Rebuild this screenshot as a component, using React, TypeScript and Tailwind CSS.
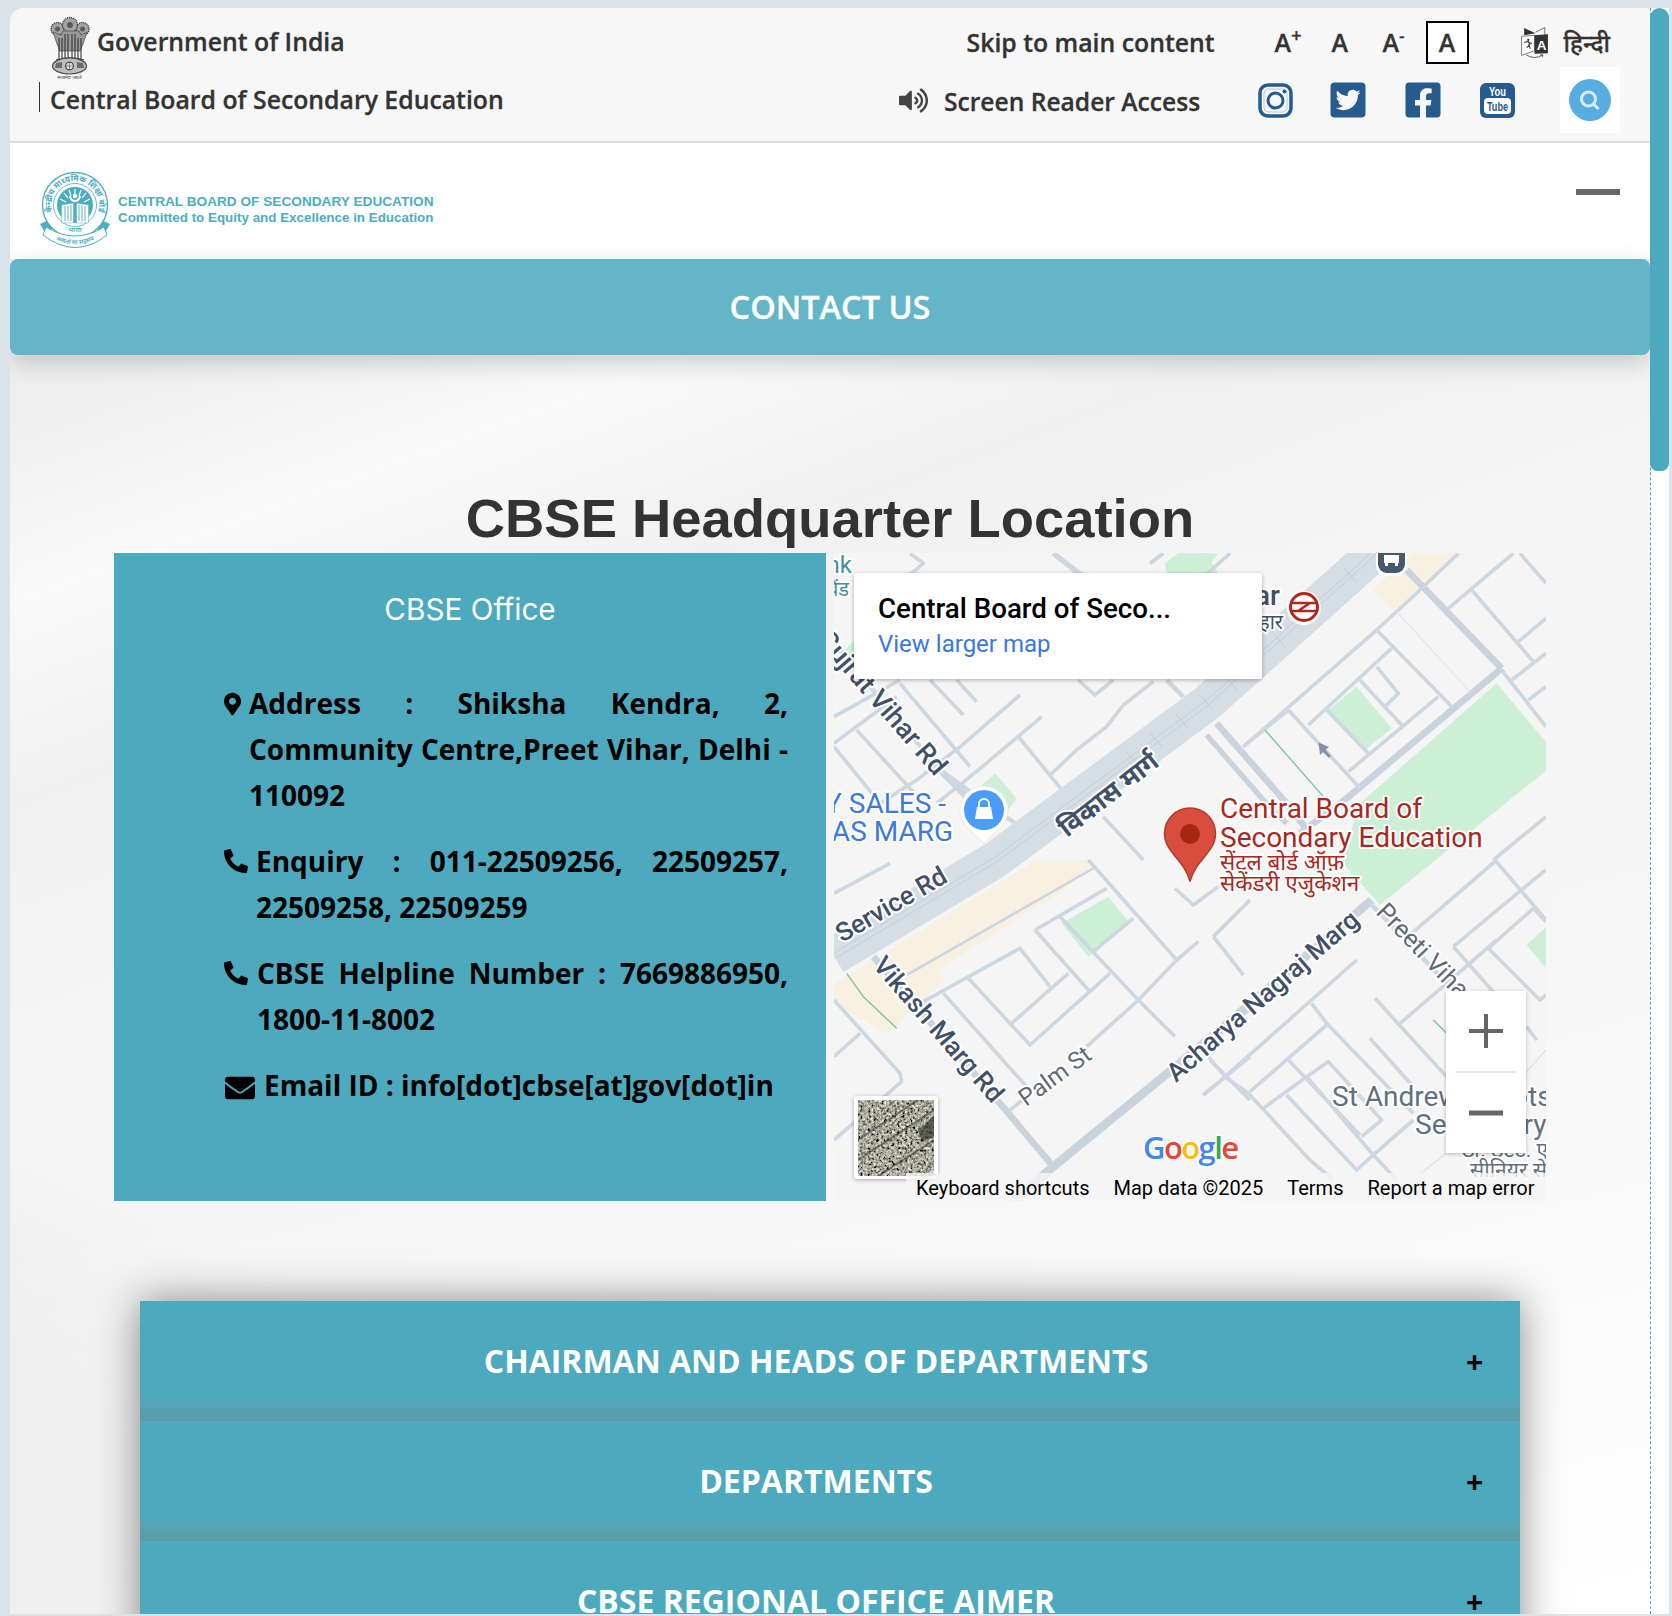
import React from "react";
import { FaMapMarkerAlt, FaPhoneAlt, FaEnvelope, FaVolumeUp, FaTwitterSquare, FaFacebookSquare } from "react-icons/fa";

const sans = "font-['Open_Sans','Noto_Sans',sans-serif]";
const ROAD = "#cdd7e2";
const THICK = "#c9d3de";

const Road = ({ p, w = 11, c = ROAD }: { p: string; w?: number; c?: string }) => (
  <polyline points={p} fill="none" stroke={c} strokeWidth={w} strokeLinejoin="round" strokeLinecap="butt" />
);

const Label = ({ x, y, a = 0, s = 26, c = "#3f5068", w = 500, anchor = "start", children }: { x: number; y: number; a?: number; s?: number; c?: string; w?: number; anchor?: "start" | "end" | "middle"; children: React.ReactNode }) => (
  <text transform={`translate(${x} ${y}) rotate(${a})`} fontFamily="Roboto, 'Noto Sans', sans-serif" fontSize={s} fontWeight={w} fill={c} stroke="#ffffff" strokeWidth={4} strokeLinejoin="round" paintOrder="stroke" textAnchor={anchor}>
    {children}
  </text>
);

function MapDrawing() {
  const beige = "#f8f0e0";
  const green = "#ccefd6";
  return (
    <svg viewBox="834 553 712 648" width="712" height="648" className="block">
      <rect x="834" y="553" width="712" height="648" fill="#f5f5f5" />
      {/* areas */}
      <g transform="translate(830 540) scale(0.33333)" fill={green}>
        <polygon points="1005,70 1045,40 1130,40 1165,100 1010,100" />
        <polygon points="40,335 75,300 120,340 90,420" />
        <polygon points="430,760 495,700 560,775 530,815" />
      </g>
      <g transform="translate(1200 540) scale(0.33333)">
        <polygon fill={green} points="0,40 55,40 40,60 0,90" />
        <polygon fill={green} points="470,440 575,565 495,630 385,510" />
        <polygon fill={green} points="890,430 1038,605 1038,692 540,1095 425,965 480,790" />
        <polygon fill={beige} points="520,150 640,40 790,40 580,210" />
      </g>
      <g transform="translate(830 860) scale(0.33333)">
        <polygon fill={beige} points="12,372 620,0 780,0 780,20 695,95 620,140 565,175 470,240 320,330 345,360 270,430 200,500 170,520 12,430" />
        <polygon fill={green} points="835,110 900,190 775,290 695,190" />
      </g>
      <g transform="translate(1200 860) scale(0.33333)">
        <polygon fill={green} points="1038,200 980,255 1038,325" />
      </g>

      {/* streets */}
      <g transform="translate(830 540) scale(0.33333)">
        <Road p="670,40 760,110" w={16} />
        <Road p="960,70 1000,40" w={12} />
        <Road p="240,40 280,70 210,130" />
        <Road p="12,310 330,690 570,860" w={12} />
        <Road p="330,690 430,790" w={20} />
        <Road p="210,430 420,680" />
        <Road p="300,420 400,525" />
        <Road p="380,420 440,485" />
        <Road p="80,570 290,800" />
        <Road p="12,620 150,790" />
        <Road p="12,530 210,420" />
        <Road p="12,610 200,470" />
        <Road p="570,465 385,625 260,720 150,790" />
        <Road p="635,530 445,690 320,790" />
        <Road p="565,590 700,755" />
        <Road p="660,705 740,630 830,560 880,495 970,425" />
        <Road p="745,420 795,465 850,420" />
        <Road p="1010,420 1060,470" w={14} />
        <Road p="820,830 940,960" />
      </g>
      <g transform="translate(1200 540) scale(0.33333)">
        <Road p="90,40 0,120" />
        <Road p="620,90 905,385" w={20} c={THICK} />
        <Road p="905,385 440,775 300,880" w={20} c={THICK} />
        <Road p="530,270 760,505" />
        <Road p="130,620 530,270 660,150 775,40" />
        <Road p="265,510 480,745" />
        <Road p="325,555 575,325" />
        <Road p="380,510 505,640" />
        <Road p="445,695 715,470" />
        <Road p="480,420 605,555" />
        <Road p="530,380 595,460 555,500" />
        <Road p="745,205 940,40" />
        <Road p="815,150 1000,365" />
        <Road p="960,40 1038,130" />
        <Road p="955,305 1038,235" />
        <Road p="935,420 1038,340" />
        <Road p="905,390 1038,560" />
        <Road p="985,480 1038,440" />
        <Road p="880,960 1038,830" />
        <Road p="265,510 130,620" />
        <Road p="50,550 260,790 330,880" w={20} c={THICK} />
        <Road p="20,585 190,780 260,850" w={16} c={THICK} />
        <Road p="590,215 810,455" w={4} c="#e6e6e8" />
        <Road p="195,570 370,770" w={4} c="#7cc2a0" />
      </g>
      <g transform="translate(830 860) scale(0.33333)">
        <Road p="12,100 180,10" />
        <Road p="130,290 510,730 670,920" w={20} c={THICK} />
        <Road p="230,345 790,25" w={8} />
        <Road p="280,425 570,265 660,380" />
        <Road p="340,400 590,680" />
        <Road p="415,355 600,555 840,340" />
        <Road p="545,490 715,340" />
        <Road p="615,210 830,85" />
        <Road p="615,210 780,395" />
        <Road p="690,170 925,420 1035,530" />
        <Road p="790,275 910,175" />
        <Road p="775,0 1040,300 925,420 770,560" />
        <Road p="1105,245 1040,300" />
        <Road p="1035,85 1090,135 1165,80" />
        <Road p="1150,230 1240,345" />
        <Road p="1150,230 1260,120" />
        <Road p="12,590 90,520" />
        <Road p="12,420 210,640 215,665 12,840" />
        <Road p="1120,705 1260,590" />
        <Road p="1140,600 1260,720" />
        <Road p="540,750 590,710" />
        <Road p="50,340 100,410 200,505" w={4} c="#7cc2a0" />
        <Road p="1330,380 670,920 550,1020" w={26} c={THICK} />
      </g>
      <g transform="translate(1200 860) scale(0.33333)">
        <Road p="515,120 0,560" w={26} c={THICK} />
        <Road p="510,130 540,160 770,400" w={14} />
        <Road p="470,300 75,650 10,705" />
        <Road p="0,560 75,650 145,700 330,900 400,960" />
        <Road p="335,430 380,490 640,760" />
        <Road p="380,495 150,695" />
        <Road p="265,600 480,825" />
        <Road p="190,745 320,650 385,605 545,780 485,830" />
        <Road p="320,650 520,885 640,780" />
        <Road p="260,705 470,930 520,885 590,960" />
        <Road p="525,415 740,650" />
        <Road p="510,535 640,680" />
        <Road p="600,490 740,370 890,240" />
        <Road p="635,220 890,0" />
        <Road p="760,260 1000,60 1038,30" />
        <Road p="885,0 1038,180" />
        <Road p="760,260 880,395" />
        <Road p="865,265 1020,420 1038,405" />
        <Road p="865,265 1000,145 1038,185" />
        <Road p="980,500 1010,540" />
        <Road p="975,640 1038,570" w={4} c="#e2e2e4" />
        <Road p="650,950 800,830" w={4} c="#e2e2e4" />
        <Road p="700,480 740,520" w={4} c="#7cc2a0" />
      </g>

      {/* main road with rail */}
      <polyline points="834,956 995,860 1207,703 1350,575 1410,520" fill="none" stroke="#d5dde5" strokeWidth="37" strokeLinejoin="round" />
      <polyline points="834,953 995,857 1207,700 1350,572 1410,517" fill="none" stroke="#c8cdd2" strokeWidth="1" />
      <polyline points="834,959 995,863 1207,706 1350,578 1410,523" fill="none" stroke="#c8cdd2" strokeWidth="1" />
      <g stroke="#c8cdd2" strokeWidth="1">
        <path d="M1201,696 l12,14 M1226,677 l12,14 M1273,633 l12,14 M1344,568 l12,14 M1126,751 l12,14 M1176,714 l12,14 M1150,733 l12,14" />
      </g>

      {/* labels */}
      <Label x={852} y={573} c="#3f919d" anchor="end" s={24} w={400}>Bank</Label>
      <Label x={849} y={596} c="#3f919d" anchor="end" s={20} w={400}>बैंड</Label>
      <Label x={1280} y={605} c="#3e5068" anchor="end" s={28} w={500}>Preet Vihar</Label>
      <Label x={1283} y={629} c="#3e5068" anchor="end" s={20} w={400}>प्रीत विहार</Label>
      <Label x={935} y={777} a={49} s={27} anchor="end">Gujrat Vihar Rd</Label>
      <Label x={1067} y={838} a={-38} s={26} w={700}>विकास मार्ग</Label>
      <Label x={946} y={813} anchor="end" c="#3b78e0" s={28} w={400}>MANY SALES -</Label>
      <Label x={953} y={841} anchor="end" c="#3b78e0" s={28} w={400}>VIKAS MARG</Label>
      <Label x={842} y={943} a={-30} s={26}>Service Rd</Label>
      <Label x={872} y={966} a={49} s={26}>Vikash Marg Rd</Label>
      <Label x={1026} y={1107} a={-36} s={24} c="#5d6a75" w={400}>Palm St</Label>
      <Label x={1176} y={1083} a={-41} s={26}>Acharya Nagraj Marg</Label>
      <Label x={1375} y={913} a={46} s={25} c="#5d6a75" w={400}>Preeti Vihar</Label>
      <Label x={1332} y={1106} s={28} c="#5f7180" w={400}>St Andrews Scots</Label>
      <Label x={1415} y={1134} s={28} c="#5f7180" w={400}>Secondary</Label>
      <Label x={1548} y={1157} s={21} c="#5f7180" w={400} anchor="end">Sr. Sec. ए</Label>
      <Label x={1470} y={1177} s={21} c="#5f7180" w={400}>सीनियर से</Label>
      <Label x={1220} y={818} s={28} c="#a8271e" w={400}>Central Board of</Label>
      <Label x={1220} y={847} s={28} c="#a8271e" w={400}>Secondary Education</Label>
      <Label x={1220} y={870} s={22.500} c="#a8271e" w={400}>सेंट्रल बोर्ड ऑफ़</Label>
      <Label x={1220} y={891} s={22.500} c="#a8271e" w={400}>सेकेंडरी एजुकेशन</Label>

      {/* pins */}
      <polygon points="1318.500,742.500 1329,747 1325.500,750 1331,756 1329,758 1323,752 1320,755" fill="#8391a1" />
      <g>
        <rect x="1376" y="540" width="31" height="36" rx="10" fill="#ffffff" />
        <rect x="1378" y="540" width="27" height="33" rx="9" fill="#47596f" />
        <rect x="1384" y="555" width="15" height="8" fill="#ffffff" />
        <rect x="1385" y="550" width="13" height="3" fill="#ffffff" />
        <rect x="1385" y="563" width="3" height="3" fill="#ffffff" />
        <rect x="1395" y="563" width="3" height="3" fill="#ffffff" />
      </g>
      <g>
        <circle cx="1304" cy="608" r="17" fill="#ffffff" />
        <circle cx="1304" cy="607" r="13.500" fill="#ffffff" stroke="#b3261e" strokeWidth="3" />
        <path d="M1291,603 H1317 M1291,611 H1317 M1298,603 H1310 L1298,611" fill="none" stroke="#b3261e" strokeWidth="2.500" />
      </g>
      <g>
        <path d="M984,786 a24,24 0 0 1 17,41 l-17,16 l-17,-16 a24,24 0 0 1 17,-41 z" fill="#ffffff" stroke="#d8d8d8" strokeWidth="0.500" />
        <circle cx="984" cy="810" r="20" fill="#4b9cf7" />
        <path d="M975,819 l2,-12 h14 l2,12 z" fill="#ffffff" />
        <path d="M979,807 v-3 a5,5 0 0 1 10,0 v3" fill="none" stroke="#ffffff" strokeWidth="2" />
      </g>
      <g>
        <path d="M1190,808 a25.500,25.500 0 0 1 25.500,25.500 c0,19 -20,26 -25.500,48 c-5.500,-22 -25.500,-29 -25.500,-48 a25.500,25.500 0 0 1 25.500,-25.500 z" fill="#d94d3e" stroke="#b23a2c" strokeWidth="1.500" />
        <circle cx="1190" cy="834" r="10" fill="#a52714" />
      </g>

      {/* Google */}
      <text x="1143" y="1159" fontFamily="'Open Sans', sans-serif" fontSize="31" fontWeight="600" stroke="#ffffff" strokeWidth="3" paintOrder="stroke" letterSpacing="-1.600">
        <tspan fill="#4285f4">G</tspan><tspan fill="#ea4335">o</tspan><tspan fill="#fbbc05">o</tspan><tspan fill="#4285f4">g</tspan><tspan fill="#34a853">l</tspan><tspan fill="#ea4335">e</tspan>
      </text>
    </svg>
  );
}

function Satellite() {
  return (
    <svg width="76" height="76" viewBox="0 0 76 76" className="block">
      <defs>
        <filter id="sat" x="0" y="0" width="100%" height="100%">
          <feTurbulence type="fractalNoise" baseFrequency="0.38" numOctaves="3" seed="7" />
          <feColorMatrix type="matrix" values="1.1 1.1 0 0 -0.72  1.1 1.1 0 0 -0.72  1 1 0 0 -0.68  0 0 0 0 1" />
        </filter>
      </defs>
      <rect width="76" height="76" fill="#6a6a60" filter="url(#sat)" />
      <path d="M0,40 L60,0 M0,60 L76,10 M20,76 L76,40" stroke="#3f3f3a" strokeWidth="2" opacity="0.6" />
      <path d="M60,30 l16,-14 v20 l-12,6 z" fill="#33362f" opacity="0.7" />
    </svg>
  );
}

function Emblem() {
  return (
    <svg width="40" height="64" viewBox="0 0 40 64" className="block shrink-0">
      <g fill="#a3a3a3" stroke="#3a3a3a" strokeWidth="1.300" strokeDasharray="1.200 0.800">
        <circle cx="7.500" cy="13" r="6.500" />
        <circle cx="32.500" cy="13" r="6.500" />
        <circle cx="20" cy="9" r="7.500" />
      </g>
      <path d="M3,16 l4,12 l3,7 h20 l3,-7 l4,-12 l-6,3 l-2,-4 h-16 l-2,4 z" fill="#9a9a9a" stroke="#3a3a3a" strokeWidth="0.600" />
      <circle cx="20" cy="9" r="3" fill="#5a5a5a" />
      <circle cx="7.500" cy="13" r="2.500" fill="#5a5a5a" />
      <circle cx="32.500" cy="13" r="2.500" fill="#5a5a5a" />
      <path d="M9,22 v22 M12,22 v22 M15,18 v26 M18,18 v26 M22,18 v26 M25,18 v26 M28,22 v22 M31,22 v22" stroke="#333" strokeWidth="1.100" />
      <path d="M6,44 q14,-4 28,0" fill="none" stroke="#444" strokeWidth="1.300" />
      <ellipse cx="19.500" cy="50" rx="17" ry="8" fill="#bdbdbd" stroke="#4a4a4a" strokeWidth="1.200" />
      <circle cx="19.500" cy="50" r="4" fill="#e2e2e2" stroke="#333" strokeWidth="1" />
      <path d="M19.500,46 v8 M15.500,50 h8" stroke="#333" strokeWidth="0.500" />
      <path d="M5,52 l1,-5 l6,-1 l0,6 z M34,52 l-1,-5 l-6,-1 l0,6 z" fill="#6c6c6c" />
      <text x="19.500" y="63" textAnchor="middle" fontFamily="'Noto Sans', sans-serif" fontSize="5" fill="#444">सत्यमेव जयते</text>
    </svg>
  );
}

function CbseLogo() {
  const teal = "#4aaebf";
  return (
    <svg width="70" height="78" viewBox="0 0 70 78" className="block shrink-0">
      <path d="M0,52 l9,-4 l4,8 l-6,8 z M70,52 l-9,-4 l-4,8 l6,8 z" fill={teal} />
      <circle cx="35" cy="33" r="32.500" fill="#ffffff" stroke={teal} strokeWidth="1.300" />
      <circle cx="35" cy="33" r="21.500" fill="none" stroke={teal} strokeWidth="0.800" />
      <circle cx="35" cy="33" r="18" fill={teal} />
      <path id="cbseRing" d="M14.800,46 A24,24 0 1 1 55.200,46" fill="none" />
      <text fontFamily="'Noto Sans', sans-serif" fontSize="8.200" fontWeight="700" fill={teal} textAnchor="middle">
        <textPath href="#cbseRing" startOffset="50%">केन्द्रीय माध्यमिक शिक्षा बोर्ड</textPath>
      </text>
      <path d="M35,17 v7 M29,18 l2,6 M41,18 l-2,6 M24,21 l4,5 M46,21 l-4,5 M20,27 l6,3 M50,27 l-6,3" stroke="#ffffff" strokeWidth="1.200" />
      <path d="M29,24 q1,6 6,6 q5,0 6,-6 l-2,0 q-1,4 -4,4 q-3,0 -4,-4 z" fill="#ffffff" />
      <circle cx="35" cy="24" r="2.200" fill="#ffffff" />
      <path d="M21.500,33 l12,-2 v20 l-12,0 z M48.500,33 l-12,-2 v20 l12,0 z" fill="#ffffff" stroke={teal} strokeWidth="0.500" />
      <path d="M25,34 v15 M28,33.500 v15.500 M31,33 v16 M45,34 v15 M42,33.500 v15.500 M39,33 v16" stroke={teal} strokeWidth="0.900" />
      <text x="35" y="60" textAnchor="middle" fontFamily="'Noto Sans', sans-serif" fontSize="6.500" fontWeight="600" fill={teal}>भारत</text>
      <path d="M6,55 q29,18 58,0 l3,8 q-32,25 -64,0 z" fill="#ffffff" stroke={teal} strokeWidth="1" />
      <path id="cbseMotto" d="M8,63 Q35,82 62,63" fill="none" />
      <text fontFamily="'Noto Sans', sans-serif" fontSize="6.300" fontWeight="600" fill={teal} textAnchor="middle">
        <textPath href="#cbseMotto" startOffset="50%">असतो मा सद्गमय</textPath>
      </text>
    </svg>
  );
}

function TranslateIcon() {
  return (
    <svg width="27" height="31" viewBox="0 0 26 30" className="block shrink-0">
      <path d="M14,5 L23,0.500 V8" fill="none" stroke="#444" strokeWidth="0.700" />
      <path d="M3,1 L14,6 L3,8 Z" fill="#333" />
      <path d="M0.500,9 L13,8 V23 L0.500,27.500 Z" fill="#ffffff" stroke="#555" strokeWidth="0.700" />
      <path d="M13,8 L26,7 V25.500 L13,26 Z" fill="#333" />
      <text x="15.200" y="22" fontFamily="'Liberation Sans', sans-serif" fontSize="13" fontWeight="700" fill="#ffffff">A</text>
      <circle cx="7" cy="12.500" r="1.100" fill="#333" />
      <path d="M3,15 l4,-1 l1.500,3 l-3,3 M7,17 l2,4 M8,15 l2.500,1" fill="none" stroke="#333" strokeWidth="1" />
      <path d="M5,27 q8,5 16,0 M21,27 l-2.500,0 M21,27 l-0.500,2" fill="none" stroke="#444" strokeWidth="0.800" />
    </svg>
  );
}

const InstagramIcon = () => (
  <svg width="35" height="35" viewBox="0 0 35 35" className="block -mr-[2px] -ml-[1px]">
    <rect x="2" y="2" width="31" height="31" rx="8" fill="none" stroke="#265b8f" strokeWidth="3.500" />
    <rect x="6" y="6" width="23" height="23" rx="5" fill="none" stroke="#265b8f" strokeWidth="1" opacity="0.3" />
    <circle cx="17.500" cy="17.500" r="7.500" fill="none" stroke="#265b8f" strokeWidth="3" />
    <circle cx="26.500" cy="8.500" r="2" fill="#265b8f" />
  </svg>
);

const YoutubeIcon = () => (
  <svg width="35" height="35" viewBox="0 0 35 35" className="block">
    <rect width="35" height="35" rx="6" fill="#265b8f" />
    <text x="17.500" y="13" textAnchor="middle" fontFamily="'Liberation Sans', sans-serif" fontSize="12" fontWeight="700" fill="#ffffff" textLength="17" lengthAdjust="spacingAndGlyphs">You</text>
    <rect x="4" y="15" width="27" height="16" rx="4" fill="#ffffff" />
    <text x="17.500" y="28" textAnchor="middle" fontFamily="'Liberation Sans', sans-serif" fontSize="12" fontWeight="700" fill="#265b8f" textLength="21" lengthAdjust="spacingAndGlyphs">Tube</text>
  </svg>
);

const SearchIcon = () => (
  <svg width="44" height="44" viewBox="0 0 44 44" className="block blur-[0.6px]">
    <circle cx="22" cy="22" r="21" fill="#58ade0" />
    <circle cx="20.500" cy="21" r="7" fill="none" stroke="#d8edf9" strokeWidth="3" />
    <path d="M25.500,26 l5,5" stroke="#d8edf9" strokeWidth="3" />
  </svg>
);

function Header() {
  return (
    <header className={`flex justify-between h-[135px] shrink-0 bg-[#f7f7f7] border-b-2 border-[#dddddd] text-[#333333] [-webkit-text-stroke:0.3px] ${sans}`}>
      <div className="pl-[29px] pt-[8px]">
        <div className="flex items-start pl-[11px] h-[66px]">
          <Emblem />
          <span className="ml-[7px] mt-[8px] text-[24.800px] leading-[34px] font-semibold">Government of India</span>
        </div>
        <div className="border-l border-[#333333] h-[30px] pl-[10px] text-[24.800px] leading-[34px] font-semibold whitespace-nowrap">Central Board of Secondary Education</div>
      </div>
      <div className="flex flex-col items-end pr-[30px]">
        <div className="flex items-center h-[43px] mt-[13px] pr-[10px] font-semibold">
          <span className="text-[24.800px] mr-[60px]">Skip to main content</span>
          <span className="text-[25px] w-[57px] relative">A<sup className="text-[18px] -top-[10px] relative align-baseline">+</sup></span>
          <span className="text-[25px] w-[51px]">A</span>
          <span className="text-[25px] w-[43px]">A<sup className="text-[16px] -top-[10px] relative align-baseline">-</sup></span>
          <span className="w-[43px] h-[43px] border-2 border-black bg-white flex items-center justify-center text-[25px]">A</span>
          <span className="ml-[52px]"><TranslateIcon /></span>
          <span className="ml-[16px] text-[24px] font-medium font-['Noto_Sans','Noto_Sans_Devanagari','Open_Sans',sans-serif]">हिन्दी</span>
        </div>
        <div className="flex items-center h-[66px] mt-[3px]">
          <FaVolumeUp className="w-[29px] h-[29px] text-[#444444]" />
          <span className="ml-[16px] mt-[5px] text-[24.600px] font-semibold w-[257px] whitespace-nowrap">Screen Reader Access</span>
          <div className="ml-[58px] flex items-center gap-[39px] text-[#265b8f]">
            <InstagramIcon />
            <FaTwitterSquare className="w-[40px] h-[40px] -mx-[2px]" />
            <FaFacebookSquare className="w-[40px] h-[40px] -mx-[2px]" />
            <YoutubeIcon />
          </div>
          <div className="ml-[45px] w-[60px] h-[66px] bg-white flex items-center justify-center"><SearchIcon /></div>
        </div>
      </div>
    </header>
  );
}

const Info = ({ icon, gap, children }: { icon: React.ReactNode; gap: string; children: React.ReactNode }) => (
  <li className="flex">
    <span className={`${gap} shrink-0 pt-[11px]`}>{icon}</span>
    <span className="flex-1 text-justify">{children}</span>
  </li>
);

export default function App() {
  const acc = ["CHAIRMAN AND HEADS OF DEPARTMENTS", "DEPARTMENTS", "CBSE REGIONAL OFFICE AJMER"];
  return (
    <div className="w-[1672px] h-[1616px] overflow-hidden bg-[#dbe3ea] pt-[8px] pl-[10px] pr-[3px] pb-[2px] flex">
      <div className="w-[1640px] h-[1606px] rounded-tl-[14px] overflow-hidden flex flex-col bg-[#f5f5f5] bg-[linear-gradient(165deg,transparent_60%,rgba(255,255,255,0.95)_100%),linear-gradient(25deg,rgba(222,222,222,0.75)_0%,transparent_20%),linear-gradient(160deg,rgba(236,236,236,0.7)_18%,rgba(251,251,251,0.7)_27%,rgba(238,238,238,0.6)_36%,transparent_48%)]">
        <Header />
        <div className={`flex justify-between items-start h-[116px] shrink-0 bg-white pl-[30px] pr-[30px] pt-[29px] ${sans}`}>
          <div className="flex items-start">
            <CbseLogo />
            <div className="ml-[8px] mt-[22px] text-[#4aaebf] font-bold font-['Liberation_Sans',sans-serif] leading-[16px] whitespace-nowrap">
              <div className="text-[13.650px]">CENTRAL BOARD OF SECONDARY EDUCATION</div>
              <div className="text-[13.400px]">Committed to Equity and Excellence in Education</div>
            </div>
          </div>
          <div className="w-[44px] h-[6px] bg-[#666666] mt-[17px]" />
        </div>
        <div className={`h-[96px] shrink-0 rounded-[8px] bg-[#63b5c7] flex items-center justify-center text-white text-[32.500px] font-semibold [-webkit-text-stroke:0.3px] shadow-[0_8px_24px_rgba(0,0,0,0.18)] ${sans}`}>CONTACT US</div>

        <h1 className="mt-[134px] mb-[4px] text-center text-[54.400px] leading-[60px] font-bold text-[#333333] font-['Liberation_Sans',sans-serif]">CBSE Headquarter Location</h1>

        <div className="flex ml-[104px] gap-[8px] h-[648px] shrink-0">
          <div className={`w-[712px] bg-[#4da9bd] pt-[36px] pl-[110px] pr-[38px] ${sans}`}>
            <h2 className="text-center -ml-[110px] -mr-[38px] text-[29.700px] leading-[40px] text-white font-['Inter',sans-serif]">CBSE Office</h2>
            <ul className="mt-[51px] flex flex-col gap-[20px] text-[28px] leading-[46px] font-bold text-black">
              <Info gap="w-[25px]" icon={<FaMapMarkerAlt className="w-[17px] h-[26px]" />}>Address : Shiksha Kendra, 2, Community Centre,Preet Vihar, Delhi - 110092</Info>
              <Info gap="w-[32px]" icon={<FaPhoneAlt className="w-[24px] h-[24px]" />}>Enquiry : 011-22509256, 22509257, 22509258, 22509259</Info>
              <Info gap="w-[33px]" icon={<FaPhoneAlt className="w-[24px] h-[24px]" />}>CBSE Helpline Number : 7669886950, 1800-11-8002</Info>
              <Info gap="w-[40px]" icon={<FaEnvelope className="w-[30px] h-[30px] ml-[1px]" />}>Email ID : info[dot]cbse[at]gov[dot]in</Info>
            </ul>
          </div>
          <div className="relative w-[712px] h-[648px] overflow-hidden">
            <MapDrawing />
            <div className="absolute left-[20px] top-[20px] w-[408px] h-[106px] bg-white rounded-[2px] shadow-[0_1px_4px_rgba(0,0,0,0.3)] pl-[24px] pt-[19px] font-['Roboto',sans-serif]">
              <div className="text-[27.700px] leading-[34px] font-medium text-black">Central Board of Seco...</div>
              <div className="text-[24px] leading-[36px] text-[#3a78e0]">View larger map</div>
            </div>
            <div className="absolute left-[20px] top-[543px] w-[84px] h-[83px] bg-white rounded-[3px] p-[4px] shadow-[0_1px_4px_rgba(0,0,0,0.3)]"><Satellite /></div>
            <div className="absolute left-[612px] top-[438px] w-[80px] h-[162px] bg-white shadow-[0_1px_4px_rgba(0,0,0,0.25)] flex flex-col items-center">
              <svg width="34" height="34" viewBox="0 0 34 34" className="mt-[23px] block"><path d="M0,17 H34 M17,0 V34" stroke="#666666" strokeWidth="4" /></svg>
              <div className="w-[60px] h-[2px] bg-[#e6e6e6] mt-[23px]" />
              <svg width="34" height="6" viewBox="0 0 34 6" className="mt-[37px] block"><path d="M0,3 H34" stroke="#666666" strokeWidth="5" /></svg>
            </div>
            <div className="absolute left-[72px] right-0 bottom-0 h-[28px] bg-[#f5f5f5]/80 flex text-[20px] leading-[30px] text-black font-['Roboto',sans-serif] whitespace-nowrap">
              <span className="ml-[10px]">Keyboard shortcuts</span>
              <span className="ml-[24px]">Map data ©2025</span>
              <span className="ml-[24px]">Terms</span>
              <span className="ml-[24px]">Report a map error</span>
            </div>
          </div>
        </div>

        <div className={`mt-[100px] mx-[130px] shrink-0 shadow-[0_0_40px_rgba(0,0,0,0.45)] ${sans}`}>
          {acc.map((t) => (
            <div key={t} className="h-[120px] flex items-center bg-linear-to-b from-[#4da9bd] from-[78%] to-[#5f9aa6] text-white">
              <span className="w-[1352px] shrink-0 text-center text-[32px] font-bold leading-[40px]">{t}</span>
              <span className="-ml-[26px] text-black text-[30px] font-bold">+</span>
            </div>
          ))}
        </div>
      </div>
      <div className="relative w-[19px] h-[1606px] bg-white border-l border-dashed border-[#4da9bd]">
        <div className="w-[19px] -ml-[1px] h-[463px] bg-[#4da9bd] rounded-t-[10px] rounded-b-[8px]" />
      </div>
    </div>
  );
}
